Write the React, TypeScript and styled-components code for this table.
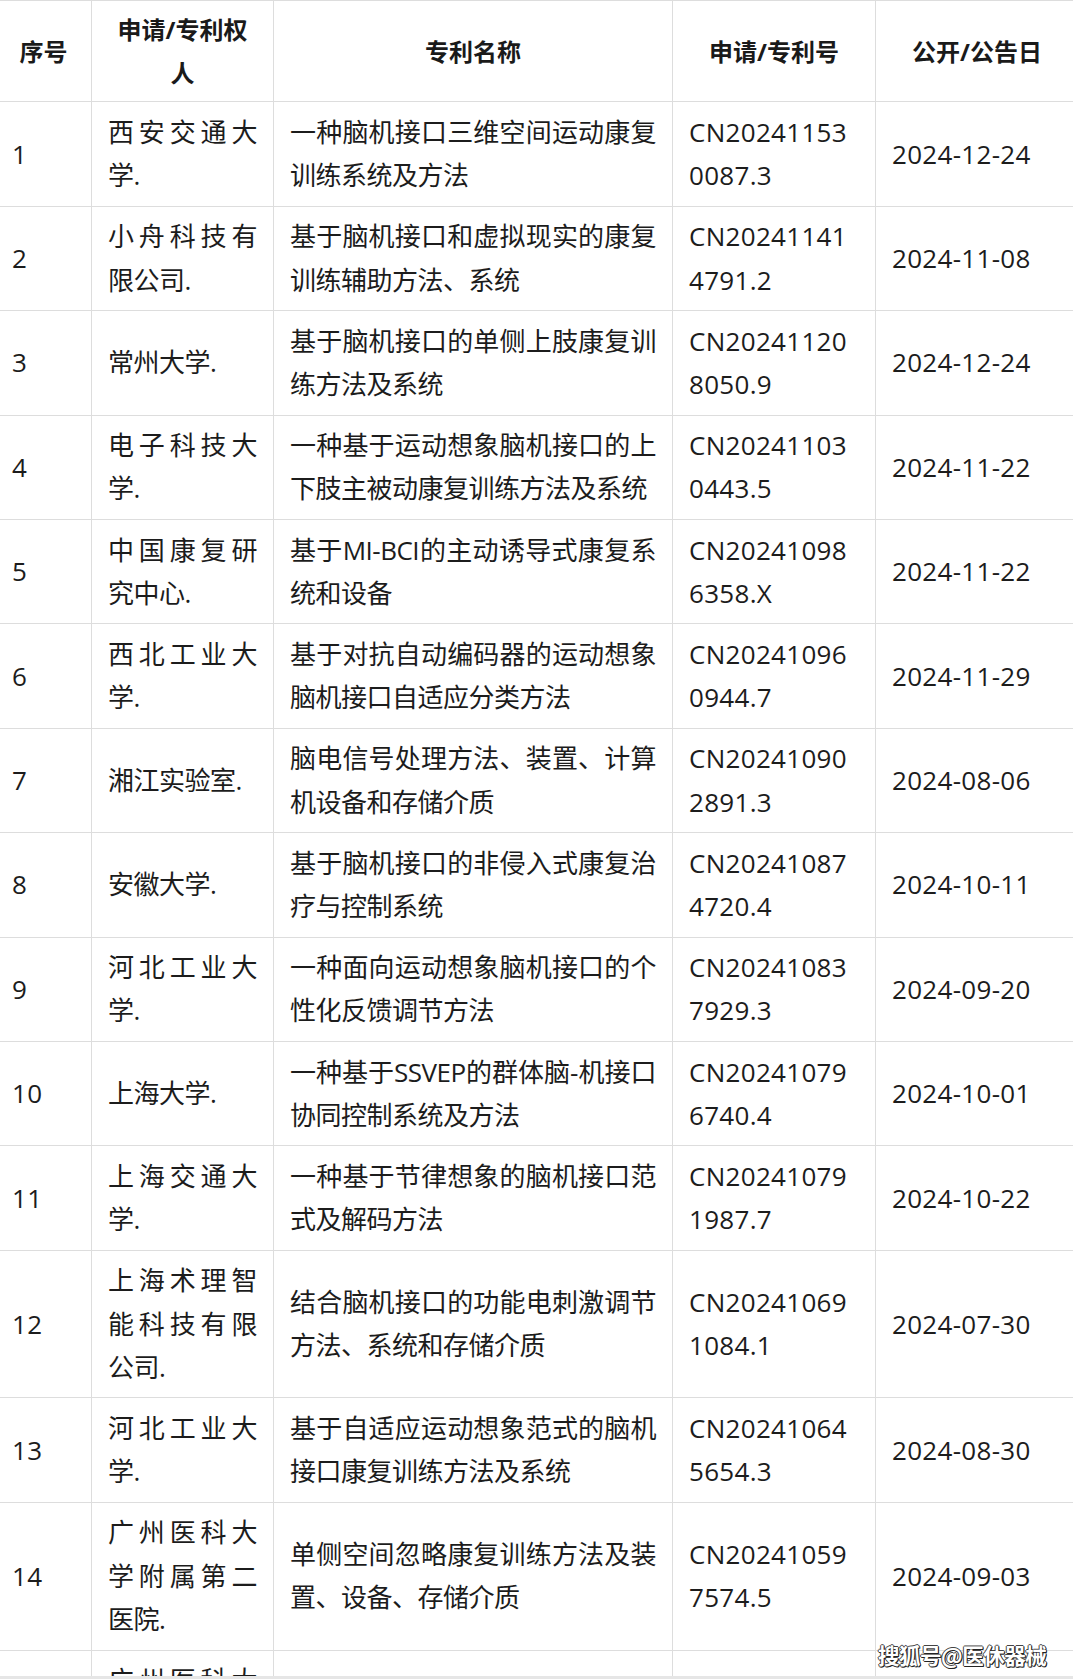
import styled, { createGlobalStyle } from "styled-components";

const GlobalStyle = createGlobalStyle`
  html, body {
    margin: 0;
    padding: 0;
    background: #ffffff;
  }
  body {
    font-family: "Open Sans", "Noto Sans CJK SC", sans-serif;
    color: #1c1c1c;
  }
`;

const Page = styled.div`
  position: relative;
  width: 1073px;
  height: 1676px;
  overflow: hidden;
  border-bottom: 3px solid #e6e6e6;
`;

const Table = styled.table`
  width: 1083px;
  margin-left: -5px;
  border-collapse: collapse;
  table-layout: fixed;
  font-size: 26px;
  line-height: 43.2px;
`;

const HeadCell = styled.th`
  border: 1px solid #dddddd;
  padding: 7px 16px;
  font-size: 24px;
  font-weight: 700;
  text-align: center;
  vertical-align: middle;
  color: #1a1a1a;
`;

const Cell = styled.td<{ $justify?: boolean; $code?: boolean }>`
  border: 1px solid #dddddd;
  padding: 8.5px ${(props) => (props.$code ? "22px" : "16px")} 8.5px 16px;
  vertical-align: middle;
  text-align: ${(props) => (props.$justify ? "justify" : "left")};
  word-break: ${(props) => (props.$code ? "break-all" : "normal")};
  letter-spacing: ${(props) => (props.$justify ? "-0.5px" : "0.3px")};
`;

const Watermark = styled.div`
  position: absolute;
  left: 878px;
  top: 1641px;
  font-family: "Noto Sans CJK SC", sans-serif;
  font-size: 21.5px;
  font-weight: 700;
  line-height: 28px;
  color: #ffffff;
  letter-spacing: -0.5px;
  text-shadow: 1px 1px 0 #222, -1px 0 0 #444, 0 -1px 0 #444, 1px 0 0 #333,
    0 1px 0 #333;
`;

interface IPatent {
  no: string;
  owner: string;
  title: string;
  code: string;
  date: string;
}

const patents: IPatent[] = [
  { no: "1", owner: "西安交通大学.", title: "一种脑机接口三维空间运动康复训练系统及方法", code: "CN202411530087.3", date: "2024-12-24" },
  { no: "2", owner: "小舟科技有限公司.", title: "基于脑机接口和虚拟现实的康复训练辅助方法、系统", code: "CN202411414791.2", date: "2024-11-08" },
  { no: "3", owner: "常州大学.", title: "基于脑机接口的单侧上肢康复训练方法及系统", code: "CN202411208050.9", date: "2024-12-24" },
  { no: "4", owner: "电子科技大学.", title: "一种基于运动想象脑机接口的上下肢主被动康复训练方法及系统", code: "CN202411030443.5", date: "2024-11-22" },
  { no: "5", owner: "中国康复研究中心.", title: "基于MI-BCI的主动诱导式康复系统和设备", code: "CN202410986358.X", date: "2024-11-22" },
  { no: "6", owner: "西北工业大学.", title: "基于对抗自动编码器的运动想象脑机接口自适应分类方法", code: "CN202410960944.7", date: "2024-11-29" },
  { no: "7", owner: "湘江实验室.", title: "脑电信号处理方法、装置、计算机设备和存储介质", code: "CN202410902891.3", date: "2024-08-06" },
  { no: "8", owner: "安徽大学.", title: "基于脑机接口的非侵入式康复治疗与控制系统", code: "CN202410874720.4", date: "2024-10-11" },
  { no: "9", owner: "河北工业大学.", title: "一种面向运动想象脑机接口的个性化反馈调节方法", code: "CN202410837929.3", date: "2024-09-20" },
  { no: "10", owner: "上海大学.", title: "一种基于SSVEP的群体脑-机接口协同控制系统及方法", code: "CN202410796740.4", date: "2024-10-01" },
  { no: "11", owner: "上海交通大学.", title: "一种基于节律想象的脑机接口范式及解码方法", code: "CN202410791987.7", date: "2024-10-22" },
  { no: "12", owner: "上海术理智能科技有限公司.", title: "结合脑机接口的功能电刺激调节方法、系统和存储介质", code: "CN202410691084.1", date: "2024-07-30" },
  { no: "13", owner: "河北工业大学.", title: "基于自适应运动想象范式的脑机接口康复训练方法及系统", code: "CN202410645654.3", date: "2024-08-30" },
  { no: "14", owner: "广州医科大学附属第二医院.", title: "单侧空间忽略康复训练方法及装置、设备、存储介质", code: "CN202410597574.5", date: "2024-09-03" },
  { no: "15", owner: "广州医科大学附属第二医院.", title: "一种康复训练方法及装置", code: "CN202410597573.0", date: "2024-09-03" },
];

function App() {
  return (
    <>
      <GlobalStyle />
      <Page>
        <Table>
          <colgroup>
            <col style={{ width: 96 }} />
            <col style={{ width: 182 }} />
            <col style={{ width: 399 }} />
            <col style={{ width: 203 }} />
            <col style={{ width: 203 }} />
          </colgroup>
          <thead>
            <tr>
              <HeadCell>序号</HeadCell>
              <HeadCell>申请/专利权人</HeadCell>
              <HeadCell>专利名称</HeadCell>
              <HeadCell>申请/专利号</HeadCell>
              <HeadCell>公开/公告日</HeadCell>
            </tr>
          </thead>
          <tbody>
            {patents.map((p) => (
              <tr key={p.no}>
                <Cell>{p.no}</Cell>
                <Cell $justify>{p.owner}</Cell>
                <Cell $justify>{p.title}</Cell>
                <Cell $code>{p.code}</Cell>
                <Cell>{p.date}</Cell>
              </tr>
            ))}
          </tbody>
        </Table>
        <Watermark>搜狐号@医休器械</Watermark>
      </Page>
    </>
  );
}

export default App;
